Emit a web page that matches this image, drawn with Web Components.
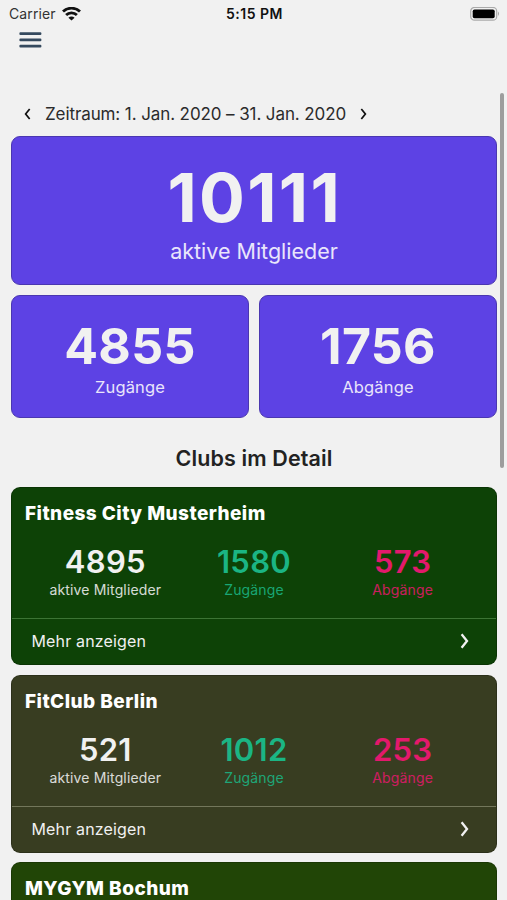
<!DOCTYPE html>
<html lang="de">
<head>
<meta charset="utf-8">
<title>Clubs im Detail</title>
<style>
  html, body {
    margin: 0;
    height: 900px;
    overflow: hidden;
    background: #f1f1f1;
  }
  body {
    font-family: Inter, Roboto, sans-serif;
    color: #222222;
  }
</style>
</head>
<body>
<club-dashboard></club-dashboard>

<script>
'use strict';

class StatusBar extends HTMLElement {
  constructor() {
    super();
    this.attachShadow({ mode: 'open' });
    this.shadowRoot.innerHTML = `
      <style>
        :host {
          display: grid;
          grid-template-columns: 1fr auto 1fr;
          align-items: center;
          height: 28px;
          padding: 0 7px 0 9px;
          font-size: 14px;
          line-height: 28px;
          color: #111111;
        }
        .carrier {
          display: flex;
          align-items: center;
          gap: 6px;
          color: #333333;
        }
        .carrier span { letter-spacing: 0.1px; }
        .time { font-weight: 600; letter-spacing: 0.5px; }
        .battery { justify-self: end; display: block; }
        svg { display: block; }
      </style>
      <div class="carrier">
        <span>Carrier</span>
        <svg width="19" height="15" viewBox="0 0 19 15" fill="none" stroke="#111111" stroke-width="2.8">
          <path d="M1 4.5 C5.5 0.1 13.5 0.1 18 4.5"/>
          <path d="M4.1 8.1 C7 5.2 12 5.2 14.9 8.1"/>
          <path d="M9.5 13.5 L6.4 10.7 C8.2 9.1 10.8 9.1 12.6 10.7 Z" fill="#111111" stroke="none"/>
        </svg>
      </div>
      <div class="time">5:15 PM</div>
      <svg class="battery" width="30" height="15" viewBox="0 0 30 15">
        <rect x="0.7" y="0.4" width="26" height="12.8" rx="3.8" fill="#f1f1f1" stroke="#aaaaaa" stroke-width="1.2"/>
        <rect x="2.7" y="2.4" width="22" height="8.8" rx="1.8" fill="#000000"/>
        <path d="M28 4.5 Q30 6.7 28 9 Z" fill="#a5a5a5"/>
      </svg>
    `;
  }
}

class MenuButton extends HTMLElement {
  constructor() {
    super();
    this.attachShadow({ mode: 'open' });
    this.shadowRoot.innerHTML = `
      <style>
        :host { display: block; height: 16px; padding: 4px 0 0 19px; }
        svg { display: block; }
      </style>
      <svg width="23" height="16" viewBox="0 0 23 16" fill="#34495e">
        <rect x="0.4" y="0.3" width="22" height="2.7" rx="1"/>
        <rect x="0.4" y="6.6" width="22" height="2.7" rx="1"/>
        <rect x="0.4" y="12.8" width="22" height="2.7" rx="1"/>
      </svg>
    `;
  }
}

class ChevronIcon extends HTMLElement {
  connectedCallback() {
    let left = this.getAttribute('direction') === 'left';
    this.attachShadow({ mode: 'open' });
    this.shadowRoot.innerHTML = `
      <style>
        :host { display: block; width: 7px; height: 12px; }
        :host([large]) { width: 9px; height: 16px; }
        svg { display: block; width: 100%; height: 100%; }
      </style>
      <svg viewBox="0 0 9 16" fill="none" stroke="currentColor" stroke-width="2.3">
        <path d="${left ? 'M7.4 1.3 L2 8 L7.4 14.7' : 'M1.6 1.3 L7 8 L1.6 14.7'}"/>
      </svg>
    `;
  }
}

class PeriodPicker extends HTMLElement {
  constructor() {
    super();
    this.attachShadow({ mode: 'open' });
    this.shadowRoot.innerHTML = `
      <style>
        :host {
          display: flex;
          align-items: center;
          height: 24px;
          padding-left: 24px;
          font-size: 17px;
          line-height: 24px;
          color: #2b2b2b;
        }
        .label { width: 301px; margin: 0 14px; white-space: nowrap; letter-spacing: -0.1px; }
        chevron-icon { color: #111111; }
      </style>
      <chevron-icon direction="left"></chevron-icon>
      <div class="label"><slot></slot></div>
      <chevron-icon></chevron-icon>
    `;
  }
}

class TotalCard extends HTMLElement {
  connectedCallback() {
    this.attachShadow({ mode: 'open' });
    this.shadowRoot.innerHTML = `
      <style>
        :host {
          display: block;
          box-sizing: border-box;
          height: 123px;
          padding-top: 25px;
          border: 1px solid #4a37b0;
          border-radius: 9px;
          background: #5d42e4;
          color: #f1f1f1;
          text-align: center;
        }
        .value { font-size: 50px; line-height: 50px; font-weight: 650; letter-spacing: 0.3px; }
        .label { margin-top: 6px; font-size: 16.5px; line-height: 20px; letter-spacing: 0.15px; color: #e9e5fb; }
        :host([large]) { height: 149px; padding-top: 30px; }
        :host([large]) .value { font-size: 68px; line-height: 60px; font-weight: 700; letter-spacing: 2.3px; text-indent: 1.6px; }
        :host([large]) .label { margin-top: 9px; font-size: 21.5px; line-height: 30px; letter-spacing: 0; }
      </style>
      <div class="value">${this.getAttribute('value')}</div>
      <div class="label"><slot></slot></div>
    `;
  }
}

class ClubFigure extends HTMLElement {
  connectedCallback() {
    this.attachShadow({ mode: 'open' });
    this.shadowRoot.innerHTML = `
      <style>
        :host { display: block; text-align: center; color: #f1f1f1; }
        :host([kind="in"]) { color: #1bb584; }
        :host([kind="out"]) { color: #e3196c; }
        .value { font-size: 31px; line-height: 32px; font-weight: 600; letter-spacing: 0.3px; }
        .label { margin-top: 2px; font-size: 14px; line-height: 20px; letter-spacing: 0.15px; opacity: 0.88; }
      </style>
      <div class="value">${this.getAttribute('value')}</div>
      <div class="label"><slot></slot></div>
    `;
  }
}

class ClubCard extends HTMLElement {
  connectedCallback() {
    this.attachShadow({ mode: 'open' });
    this.shadowRoot.innerHTML = `
      <style>
        :host {
          display: block;
          box-sizing: border-box;
          height: 178px;
          border: 1px solid rgba(0, 0, 0, 0.2);
          border-radius: 9px;
          background: var(--club-color);
          color: #ffffff;
        }
        h3 {
          margin: 0;
          padding: 14px 13px 0;
          font-size: 19px;
          line-height: 24px;
          font-weight: 800;
          letter-spacing: 0.45px;
        }
        .figures {
          display: grid;
          grid-template-columns: repeat(3, 1fr);
          height: 72px;
          padding: 20px 19px 0;
        }
        .more {
          display: flex;
          align-items: center;
          justify-content: space-between;
          height: 44px;
          padding: 0 27px 0 19.5px;
          border-top: 1.5px solid var(--club-line);
          font-size: 16px;
          letter-spacing: 0.15px;
          color: #f1f1f1;
        }
      </style>
      <h3>${this.getAttribute('name')}</h3>
      <div class="figures"><slot></slot></div>
      ${this.children.length ? '<div class="more"><span>Mehr anzeigen</span><chevron-icon large></chevron-icon></div>' : ''}
    `;
  }
}

class ClubDashboard extends HTMLElement {
  constructor() {
    super();
    this.attachShadow({ mode: 'open' });
    this.shadowRoot.innerHTML = `
      <style>
        :host {
          display: block;
          position: relative;
          height: 900px;
          overflow: hidden;
        }
        period-picker { margin-top: 54px; }
        main { padding: 0 10px 0 11px; }
        .totals {
          display: grid;
          grid-template-columns: 1fr 1fr;
          gap: 10px;
          margin-top: 10px;
        }
        .totals [large] { grid-column: 1 / 3; }
        h2 {
          margin: 25px 0 14px;
          font-size: 21.5px;
          line-height: 30px;
          font-weight: 600;
          letter-spacing: 0.12px;
          text-align: center;
        }
        .clubs { display: grid; gap: 9.6px; }
        .scrollbar {
          position: absolute;
          top: 93px;
          right: 3.5px;
          width: 4px;
          height: 375px;
          border-radius: 2px;
          background: #9d9d9d;
        }
      </style>
      <status-bar></status-bar>
      <menu-button></menu-button>
      <period-picker>Zeitraum: 1. Jan. 2020 – 31. Jan. 2020</period-picker>
      <main>
        <div class="totals">
          <total-card value="10111" large>aktive Mitglieder</total-card>
          <total-card value="4855">Zugänge</total-card>
          <total-card value="1756">Abgänge</total-card>
        </div>
        <h2>Clubs im Detail</h2>
        <div class="clubs"></div>
      </main>
      <div class="scrollbar"></div>
    `;
  }
  connectedCallback() {
    this.addClub('Fitness City Musterheim', '#0d4206', '#3c7434', [4895, 1580, 573]);
    this.addClub('FitClub Berlin', '#383d21', '#73775b', [521, 1012, 253]);
    this.addClub('MYGYM Bochum', '#214506', '#4d7334');
  }
  addClub(name, color, line, figures) {
    let card = document.createElement('club-card');
    card.setAttribute('name', name);
    card.style.setProperty('--club-color', color);
    card.style.setProperty('--club-line', line);
    if (figures) {
      card.innerHTML = `
        <club-figure value="${figures[0]}">aktive Mitglieder</club-figure>
        <club-figure value="${figures[1]}" kind="in">Zugänge</club-figure>
        <club-figure value="${figures[2]}" kind="out">Abgänge</club-figure>
      `;
    }
    this.shadowRoot.querySelector('.clubs').appendChild(card);
  }
}

customElements.define('status-bar', StatusBar);
customElements.define('menu-button', MenuButton);
customElements.define('chevron-icon', ChevronIcon);
customElements.define('period-picker', PeriodPicker);
customElements.define('total-card', TotalCard);
customElements.define('club-figure', ClubFigure);
customElements.define('club-card', ClubCard);
customElements.define('club-dashboard', ClubDashboard);
</script>
</body>
</html>
